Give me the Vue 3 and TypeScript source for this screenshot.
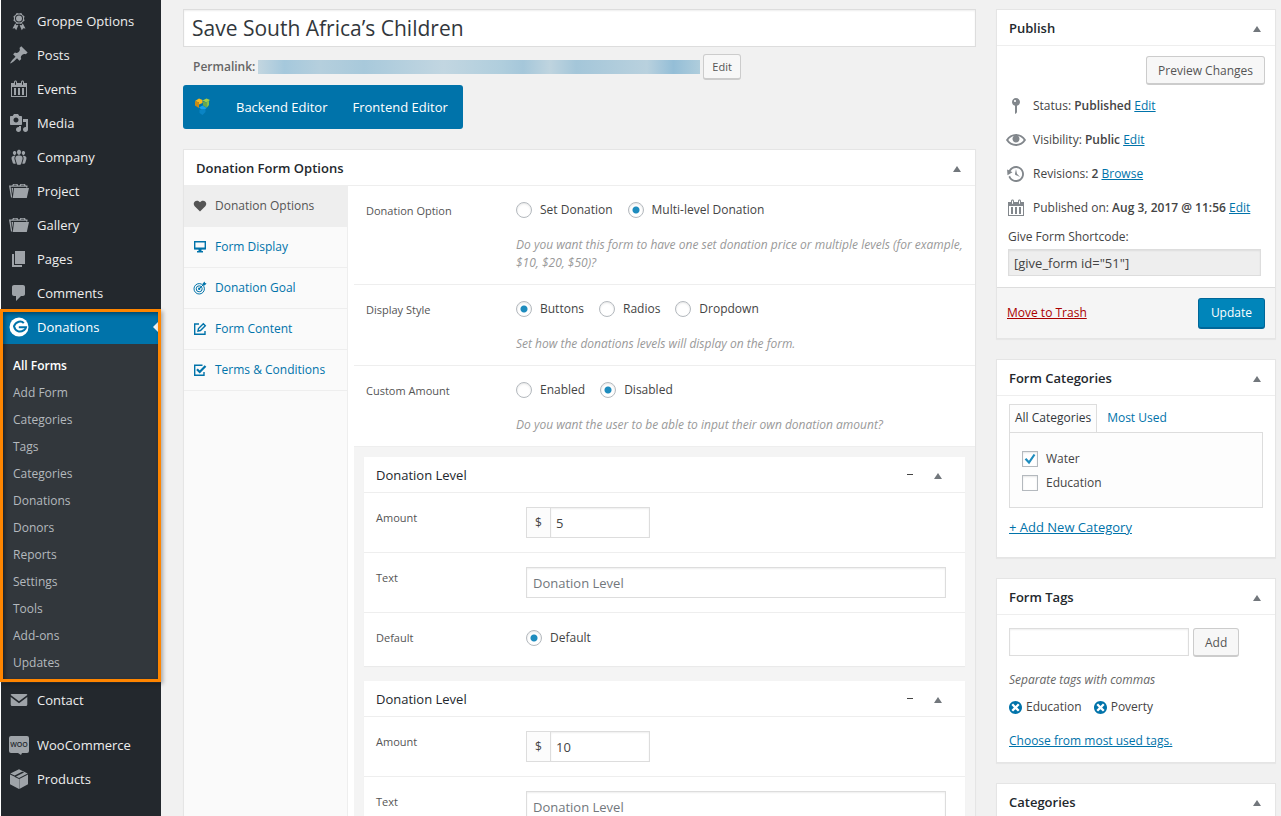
<script setup lang="ts">
import { ref } from 'vue'

interface MenuItem { label: string; icon: string }

const icons: Record<string, string> = {
  award: 'M4.5 5.2 5 7.5l-.5 2.3 2 1.2L7.700 13l2.300-.5 2.300.5 1.200-2 2-1.200L15 7.500l.5-2.300-2-1.300-1.200-2-2.300.6-2.300-.6-1.300 2zM10 11.500a4 4 0 1 1 0-8 4 4 0 0 1 0 8zm0-1a3 3 0 1 0 0-6 3 3 0 0 0 0 6zM6.300 12.200 3.500 17.500l2.300-.2 1.400 1.900 2.200-5.300-2.100.3zM13.700 12.200l2.800 5.300-2.300-.2-1.400 1.900-2.200-5.300 2.100.3z',
  pin: 'M10.44 3.02l1.82-1.82 6.36 6.35-1.83 1.82c-1.05-.68-2.48-.57-3.41.36l-.75.75c-.92.93-1.04 2.35-.35 3.41l-1.83 1.82-2.41-2.41-2.8 2.79c-.42.42-3.38 2.71-3.8 2.29s1.86-3.39 2.28-3.81l2.79-2.79L4.1 9.36l1.83-1.82c1.05.69 2.48.57 3.4-.36l.75-.75c.93-.92 1.05-2.35.36-3.41z',
  calendar: 'M15 4h3v14H2V4h3V3c0-.83.67-1.5 1.5-1.5S8 2.17 8 3v1h4V3c0-.83.67-1.5 1.5-1.5S15 2.17 15 3v1zM6 3v2.5c0 .28.22.5.5.5s.5-.22.5-.5V3c0-.28-.22-.5-.5-.5S6 2.720 6 3zm7 0v2.5c0 .28.22.5.5.5s.5-.22.5-.5V3c0-.28-.22-.5-.5-.5s-.5.22-.5.5zm4 14V8H3v9h14zM7 16V9H5v7h2zm4 0V9H9v7h2zm4 0V9h-2v7h2z',
  media: 'M13 11V4c0-.55-.45-1-1-1h-1.67L9 1H5L3.67 3H2c-.55 0-1 .45-1 1v7c0 .55.45 1 1 1h10c.55 0 1-.45 1-1zM7 4.500c1.380 0 2.500 1.120 2.500 2.500S8.380 9.500 7 9.500 4.500 8.380 4.500 7 5.620 4.500 7 4.500zM14 6h5v10.500c0 1.380-1.120 2.500-2.500 2.500S14 17.880 14 16.500s1.120-2.500 2.500-2.500c.17 0 .34.02.5.05V9h-3V6zm-4 8.050V13h2v3.500c0 1.380-1.120 2.500-2.500 2.500S7 17.880 7 16.500 8.120 14 9.500 14c.17 0 .34.02.5.05z',
  groups: 'M8.03 4.46c-.29 1.28.55 3.46 1.97 3.46 1.41 0 2.25-2.18 1.96-3.46-.22-.98-1.08-1.63-1.96-1.63-.89 0-1.74.65-1.97 1.63zm-4.13.9c-.25 1.08.47 2.93 1.67 2.93s1.92-1.85 1.67-2.93c-.19-.83-.92-1.39-1.67-1.39s-1.48.56-1.67 1.39zm8.86 0c-.25 1.08.47 2.93 1.66 2.93 1.2 0 1.92-1.85 1.67-2.93-.19-.83-.92-1.39-1.67-1.39-.74 0-1.47.56-1.66 1.39zm-.59 11.43l1.25-4.3C14.2 10 12.71 8.47 10 8.47c-2.72 0-4.21 1.53-3.44 4.02l1.26 4.3C8.05 17.51 9 18 10 18c.98 0 1.94-.49 2.17-1.21zm-6.1-7.63c-.49.67-.96 1.83-.42 3.59l1.12 3.79c-.34.2-.77.31-1.2.31-.85 0-1.65-.41-1.85-1.03l-1.07-3.65c-.65-2.11.61-3.4 2.92-3.4.27 0 .54.02.79.06-.1.1-.2.22-.29.33zm8.35-.39c2.31 0 3.58 1.29 2.92 3.4l-1.07 3.65c-.2.62-1 1.03-1.85 1.03-.43 0-.86-.11-1.2-.31l1.11-3.77c.55-1.78.08-2.94-.42-3.61-.08-.11-.18-.23-.28-.33.25-.04.51-.06.79-.06z',
  folder: 'M0 4.500h3.200L4 3h4.500l.8 1.500h1.200l.8-1.500H16l.8 1.500H18.500V6.500H17V5.800H1.600l1.700 10.700H2L0 4.500zM4.600 4.500h3.200l-.4-.7H5zM12 4.500h3.200l-.4-.7h-2.400zM5 7h15L17.800 17H3.800zM2.600 7h1.600L3.300 13z',
  page: 'M6 15V2h10v13H6zm-1 1h8v2H3V5h2v11z',
  comment: 'M5 2h9c1.100 0 2 .9 2 2v7c0 1.100-.9 2-2 2h-2l-5 5v-5H5c-1.100 0-2-.9-2-2V4c0-1.100.9-2 2-2z',
  mail: 'M3.500 4h13.500c.8 0 1.300.4 1.300 1L10 11.300 1.700 5c0-.6.5-1 1.800-1zM1.700 6.900 10 13.200l8.300-6.300V14.500c0 .8-.6 1.500-1.400 1.500H3.100c-.8 0-1.400-.7-1.400-1.500z',
  box: 'M10 .300 18.700 4.600 10 8.900 7 7.400l8-4zM1.300 4.600 10 .300l4 2-8.300 4.100zM1 5.500l4.800 2.300v.1L10 10v9.900L1 15.300zM19 5.500V15.300l-8.700 4.600V10z',
  status: 'M14 6c0 1.860-1.280 3.410-3 3.860V16c0 1-2 2-2 2V9.860c-1.720-.45-3-2-3-3.860 0-2.210 1.790-4 4-4s4 1.790 4 4zM8 5c0 .55.45 1 1 1s1-.45 1-1-.45-1-1-1-1 .45-1 1z',
  eye: 'M19.7 9.4C17.7 6 14 3.9 10 3.9S2.3 6 .3 9.400L0 10l.3.6c2 3.4 5.7 5.5 9.700 5.500s7.700-2.100 9.700-5.500l.3-.6-.3-.6zM10 14.100c-3.100 0-6-1.600-7.700-4.100C3.600 8 5.700 6.600 8 6.100c-.9.6-1.500 1.700-1.500 2.900 0 1.900 1.600 3.500 3.500 3.500s3.500-1.600 3.500-3.500c0-1.200-.6-2.300-1.500-2.900 2.300.5 4.400 1.900 5.700 3.900-1.700 2.500-4.600 4.100-7.700 4.100z',
  history: 'M13.65 2.88c3.93 2.01 5.48 6.84 3.47 10.77s-6.83 5.48-10.77 3.47c-1.87-.96-3.2-2.56-3.86-4.4l1.64-1.03c.45 1.57 1.52 2.95 3.08 3.76 3.01 1.54 6.69.35 8.23-2.66 1.55-3.01.36-6.69-2.65-8.24C9.78 3.01 6.1 4.2 4.56 7.210l1.88.97-4.95 3.08-.39-5.82 1.78.91C4.9 2.4 9.75.89 13.65 2.880zm-4.36 7.83C9.11 10.53 9 10.28 9 10c0-.07.03-.12.04-.19h-.01L10 5l.97 4.81L14 13l-4.5-2.12.02-.02c-.08-.04-.16-.09-.23-.15z',
  dismiss: 'M10 2c4.420 0 8 3.580 8 8s-3.580 8-8 8-8-3.580-8-8 3.580-8 8-8zm5 11l-3-3 3-3-2-2-3 3-3-3-2 2 3 3-3 3 2 2 3-3 3 3z',
}

const topMenu: MenuItem[] = [
  { label: 'Groppe Options', icon: 'award' },
  { label: 'Posts', icon: 'pin' },
  { label: 'Events', icon: 'calendar' },
  { label: 'Media', icon: 'media' },
  { label: 'Company', icon: 'groups' },
  { label: 'Project', icon: 'folder' },
  { label: 'Gallery', icon: 'folder' },
  { label: 'Pages', icon: 'page' },
  { label: 'Comments', icon: 'comment' },
]

const submenu = ['All Forms', 'Add Form', 'Categories', 'Tags', 'Categories', 'Donations', 'Donors', 'Reports', 'Settings', 'Tools', 'Add-ons', 'Updates']

const tabs = [
  { id: 'heart', label: 'Donation Options' },
  { id: 'display', label: 'Form Display' },
  { id: 'goal', label: 'Donation Goal' },
  { id: 'content', label: 'Form Content' },
  { id: 'terms', label: 'Terms & Conditions' },
]
const activeTab = ref('heart')

const title = ref('Save South Africa’s Children')

const options = ref([
  {
    name: 'donation-option', label: 'Donation Option', value: 'Multi-level Donation',
    choices: ['Set Donation', 'Multi-level Donation'],
    hint: 'Do you want this form to have one set donation price or multiple levels (for example, $10, $20, $50)?',
  },
  {
    name: 'display-style', label: 'Display Style', value: 'Buttons',
    choices: ['Buttons', 'Radios', 'Dropdown'],
    hint: 'Set how the donations levels will display on the form.',
  },
  {
    name: 'custom-amount', label: 'Custom Amount', value: 'Disabled',
    choices: ['Enabled', 'Disabled'],
    hint: 'Do you want the user to be able to input their own donation amount?',
  },
])

const levels = ref([
  { amount: '5', text: '' },
  { amount: '10', text: '' },
])
const defaultLevel = ref(0)

const categories = ref([
  { label: 'Water', checked: true },
  { label: 'Education', checked: false },
])
const newTag = ref('')
const tags = ref(['Education', 'Poverty'])

function addTag(): void {
  const tag = newTag.value.trim()
  if (tag) tags.value.push(tag)
  newTag.value = ''
}
</script>

<template>
  <div class="admin">
    <nav class="sidebar" aria-label="Admin menu">
      <a v-for="item in topMenu" :key="item.label" href="#" class="menu-item">
        <svg class="icon" viewBox="0 0 20 20" aria-hidden="true"><path fill-rule="evenodd" :d="icons[item.icon]" /></svg>
        <span>{{ item.label }}</span>
      </a>
      <div class="menu-group">
        <a href="#" class="menu-item current">
          <svg class="icon" viewBox="0 0 20 20" aria-hidden="true">
            <circle cx="10" cy="10" r="9.500" />
            <path class="give-mark" d="M14.800 6.200C12.500 3.300 7 4 5 9.200c1.200 5 5.500 6.900 10 4 1-.8 1.800-1.700 2-2.900H9.800" />
          </svg>
          <span>Donations</span>
        </a>
        <ul class="submenu">
          <li v-for="(entry, i) in submenu" :key="i"><a href="#" :class="{ selected: i === 0 }">{{ entry }}</a></li>
        </ul>
      </div>
      <a href="#" class="menu-item">
        <svg class="icon" viewBox="0 0 20 20" aria-hidden="true"><path :d="icons.mail" /></svg>
        <span>Contact</span>
      </a>
      <a href="#" class="menu-item spaced">
        <svg class="icon" viewBox="0 0 20 20" aria-hidden="true">
          <path d="M2 1h16a2 2 0 0 1 2 2v13a2 2 0 0 1-2 2h-5l-1 2-3-2H2a2 2 0 0 1-2-2V3a2 2 0 0 1 2-2z" />
          <text x="10" y="12" class="woo">WOO</text>
        </svg>
        <span>WooCommerce</span>
      </a>
      <a href="#" class="menu-item">
        <svg class="icon" viewBox="0 0 20 20" aria-hidden="true"><path :d="icons.box" /></svg>
        <span>Products</span>
      </a>
    </nav>

    <main class="content">
      <section class="primary">
        <input v-model="title" class="title" type="text" aria-label="Title" />
        <div class="permalink">
          <strong>Permalink:</strong>
          <span class="url"></span>
          <button type="button" class="button small">Edit</button>
        </div>
        <div class="editors">
          <svg class="composer" viewBox="0 0 18 18" aria-hidden="true">
            <path fill="#fbb81c" d="M2 3 6 .500 9.500 2v3L6 6.500V4.500z" />
            <path fill="#c98a12" d="M2 3l4 1.500V10L2 7.500z" />
            <path fill="#a8cf45" d="m9.500 2.500 4-2 3.500 1.500-3.500 2.500z" />
            <path fill="#6aa84a" d="m10 3.500 3.500 1V10L10 7.500z" />
            <path fill="#8dbf45" d="M13.500 4.500 16 2.800V7l-2.500 3z" />
            <path fill="#17a2ee" d="m6 9.500 3.500-2 4 2.500-1.500 1.500H8.500z" />
            <path fill="#0a84c4" d="M6.500 11.500h6V14l-3 3-3-2z" />
          </svg>
          <button type="button">Backend Editor</button>
          <button type="button">Frontend Editor</button>
        </div>

        <section class="panel">
          <header class="panel-head">
            <h2>Donation Form Options</h2>
            <button type="button" class="toggle" aria-label="Toggle panel"></button>
          </header>
          <div class="form-options">
            <nav class="tabs" aria-label="Form sections">
              <a v-for="tab in tabs" :key="tab.id" href="#" :class="{ active: tab.id === activeTab }" @click.prevent="activeTab = tab.id">
                <svg viewBox="0 0 14 14" aria-hidden="true">
                  <path v-if="tab.id === 'heart'" class="solid" d="M7 12.500 1.700 7.300C-.3 5 1 1.700 4 1.700c1.300 0 2.300.6 3 1.600.7-1 1.700-1.600 3-1.600 3 0 4.300 3.300 2.300 5.600z" />
                  <template v-else-if="tab.id === 'display'">
                    <path class="line" d="M1.700 1.700h10.600v7H1.700z" /><path class="solid" d="M1.700 7.500h10.600v1.700H1.700zM5.500 9h3v2H10v1.500H4V11h1.500z" />
                  </template>
                  <template v-else-if="tab.id === 'goal'">
                    <circle class="thin" cx="6.200" cy="7.800" r="5.200" /><circle class="thin" cx="6.200" cy="7.800" r="3" /><circle class="solid" cx="6.200" cy="7.800" r="1.200" />
                    <path class="thin" d="m6.500 7.500 5-5" /><path class="solid" d="m9.500 2.700 2-2.200.6 1.500 1.500.5-2 2-1.600-.3z" />
                  </template>
                  <template v-else-if="tab.id === 'content'">
                    <path class="line" d="M6 2H1.700v10.300H12V9" /><path class="line" d="m5 9 .5-2.500L10.300 1.700l2 2L7.500 8.500z" />
                  </template>
                  <template v-else>
                    <path class="line" d="M11 9v3.300H1.700V2.300H9.500" /><path class="check" d="m4 6.300 2.700 2.700 5.800-6" />
                  </template>
                </svg>
                <span>{{ tab.label }}</span>
              </a>
            </nav>
            <div class="fields">
              <fieldset v-for="option in options" :key="option.name" class="field" :aria-label="option.label">
                <span class="label">{{ option.label }}</span>
                <div class="field-body">
                  <div class="choices">
                    <label v-for="choice in option.choices" :key="choice">
                      <input v-model="option.value" type="radio" :name="option.name" :value="choice" />
                      <span>{{ choice }}</span>
                    </label>
                  </div>
                  <p class="hint">{{ option.hint }}</p>
                </div>
              </fieldset>
              <div class="levels">
                <section v-for="(level, i) in levels" :key="i" class="level">
                  <header class="level-head">
                    <h3>Donation Level</h3>
                    <button type="button" class="remove" aria-label="Remove level"></button>
                    <button type="button" class="toggle" aria-label="Toggle level"></button>
                  </header>
                  <div class="level-row">
                    <label class="label" :for="'amount-' + i">Amount</label>
                    <div class="money">
                      <span>$</span>
                      <input :id="'amount-' + i" v-model="level.amount" type="text" />
                    </div>
                  </div>
                  <div class="level-row">
                    <label class="label" :for="'text-' + i">Text</label>
                    <input :id="'text-' + i" v-model="level.text" class="text" type="text" placeholder="Donation Level" />
                  </div>
                  <div class="level-row short">
                    <span class="label">Default</span>
                    <div class="choices">
                      <label>
                        <input v-model="defaultLevel" type="radio" name="default-level" :value="i" />
                        <span>Default</span>
                      </label>
                    </div>
                  </div>
                </section>
              </div>
            </div>
          </div>
        </section>
      </section>

      <aside class="secondary">
        <section class="panel">
          <header class="panel-head">
            <h2>Publish</h2>
            <button type="button" class="toggle" aria-label="Toggle panel"></button>
          </header>
          <div class="publish">
            <button type="button" class="button preview">Preview Changes</button>
            <div class="publish-row">
              <svg class="icon" viewBox="0 0 20 20" aria-hidden="true"><path :d="icons.status" /></svg>
              <span>Status: <b>Published</b> <a href="#">Edit</a></span>
            </div>
            <div class="publish-row">
              <svg class="icon" viewBox="0 0 20 20" aria-hidden="true"><path :d="icons.eye" /></svg>
              <span>Visibility: <b>Public</b> <a href="#">Edit</a></span>
            </div>
            <div class="publish-row">
              <svg class="icon" viewBox="0 0 20 20" aria-hidden="true"><path :d="icons.history" /></svg>
              <span>Revisions: <b>2</b> <a href="#">Browse</a></span>
            </div>
            <div class="publish-row">
              <svg class="icon" viewBox="0 0 20 20" aria-hidden="true"><path fill-rule="evenodd" :d="icons.calendar" /></svg>
              <span>Published on: <b>Aug 3, 2017 @ 11:56</b> <a href="#">Edit</a></span>
            </div>
            <label class="shortcode-label" for="shortcode">Give Form Shortcode:</label>
            <input id="shortcode" class="shortcode" type="text" readonly value='[give_form id="51"]' />
          </div>
          <footer class="publish-foot">
            <a href="#" class="trash">Move to Trash</a>
            <button type="button" class="button update">Update</button>
          </footer>
        </section>

        <section class="panel">
          <header class="panel-head">
            <h2>Form Categories</h2>
            <button type="button" class="toggle" aria-label="Toggle panel"></button>
          </header>
          <div class="categories">
            <div class="category-tabs">
              <a href="#" class="on">All Categories</a>
              <a href="#">Most Used</a>
            </div>
            <div class="category-list">
              <label v-for="category in categories" :key="category.label">
                <span class="tick">
                  <input v-model="category.checked" type="checkbox" />
                  <svg v-if="category.checked" viewBox="0 0 14 14" aria-hidden="true"><path d="M2.500 6.700 6 10.500l5.500-8" /></svg>
                </span>
                <span>{{ category.label }}</span>
              </label>
            </div>
            <a href="#" class="add-category">+ Add New Category</a>
          </div>
        </section>

        <section class="panel">
          <header class="panel-head">
            <h2>Form Tags</h2>
            <button type="button" class="toggle" aria-label="Toggle panel"></button>
          </header>
          <div class="tags">
            <form class="tag-form" @submit.prevent="addTag">
              <input v-model="newTag" type="text" aria-label="New tag" />
              <button type="submit" class="button">Add</button>
            </form>
            <p>Separate tags with commas</p>
            <div class="tag-list">
              <span v-for="tag in tags" :key="tag" class="tag">
                <button type="button" :aria-label="'Remove ' + tag" @click="tags = tags.filter((t) => t !== tag)">
                  <svg viewBox="2 2 16 16" aria-hidden="true"><path :d="icons.dismiss" /></svg>
                </button>
                {{ tag }}
              </span>
            </div>
            <a href="#">Choose from most used tags.</a>
          </div>
        </section>

        <section class="panel">
          <header class="panel-head">
            <h2>Categories</h2>
            <button type="button" class="toggle" aria-label="Toggle panel"></button>
          </header>
          <div class="categories"></div>
        </section>
      </aside>
    </main>
  </div>
</template>

<style>
body {
  margin: 0;
  background: #f1f1f1;
}
</style>

<style scoped>
* {
  box-sizing: border-box;
}

.admin {
  display: flex;
  height: 100vh;
  overflow: hidden;
  background: #f1f1f1;
  color: #444;
  font-family: "Open Sans", "Noto Sans", sans-serif;
  font-size: 12px;
  line-height: 18px;
}

button,
input {
  font-family: inherit;
  font-size: inherit;
  color: inherit;
  margin: 0;
}

button {
  cursor: pointer;
}

a {
  color: #0073aa;
}

h2,
h3,
p,
ul {
  margin: 0;
  padding: 0;
}

/* Sidebar */
.sidebar {
  flex: 0 0 161px;
  padding-top: 4px;
  border-left: 1px solid #fff;
  background: #23282d;
}

.menu-item {
  display: flex;
  align-items: center;
  gap: 8px;
  height: 34px;
  padding-left: 8px;
  color: #eee;
  font-size: 13px;
  text-decoration: none;
}

.icon {
  flex: none;
  width: 20px;
  height: 20px;
  fill: #9ea3a8;
}

.menu-item.spaced {
  margin-top: 11px;
}

.menu-group {
  position: relative;
  background: #32373c;
}

.menu-group::after {
  content: "";
  position: absolute;
  inset: -1px 0 1px -1px;
  border: 3px solid #ff8500;
  box-shadow: 2px 2px 4px rgba(0, 0, 0, 0.3), inset 2px 2px 4px rgba(0, 0, 0, 0.4);
  pointer-events: none;
}

.menu-item.current {
  position: relative;
  background: #0073aa;
  color: #fff;
}

.menu-item.current::after {
  content: "";
  position: absolute;
  right: 0;
  top: 9px;
  border: 8px solid transparent;
  border-right-color: #f1f1f1;
}

.current .icon {
  fill: #fff;
}

.give-mark {
  fill: none;
  stroke: #0073aa;
  stroke-width: 2;
}

.woo {
  fill: #23282d;
  font-size: 7px;
  font-weight: 600;
  text-anchor: middle;
}

.submenu {
  padding: 8px 0 7px;
  list-style: none;
}

.submenu a {
  display: block;
  padding-left: 12px;
  color: #b4b9be;
  line-height: 27px;
  text-decoration: none;
}

.submenu .selected {
  color: #fff;
  font-weight: 600;
}

/* Page columns */
.content {
  flex: 1;
  display: flex;
  align-items: flex-start;
  gap: 20px;
  min-width: 0;
  padding: 9px 5px 0 22px;
}

.primary {
  flex: 1;
  min-width: 0;
}

.secondary {
  flex: 0 0 280px;
  display: flex;
  flex-direction: column;
  gap: 20px;
}

.title {
  display: block;
  width: 100%;
  height: 38px;
  padding: 0 8px;
  border: 1px solid #ddd;
  background: #fff;
  box-shadow: inset 0 1px 2px rgba(0, 0, 0, 0.07);
  color: #32373c;
  font-size: 21px;
}

.permalink {
  display: flex;
  align-items: center;
  gap: 3px;
  height: 38px;
  padding: 2px 0 0 10px;
  color: #666;
}

.permalink strong {
  font-weight: 600;
}

.url {
  width: 442px;
  height: 14px;
  background: linear-gradient(90deg, #c3d6e0 0, #a5c8dc 6%, #b5cfdd 14%, #a8c9db 24%, #c2d6e1 42%, #b0cedd 55%, #a5c7da 60%, #bfd4df 66%, #a4c6d9 72%, #b9d1de 88%, #94bed7 94%, #afcddc 100%);
}

.button {
  height: 29px;
  padding: 0 11px;
  border: 1px solid #ccc;
  border-bottom-width: 2px;
  border-radius: 3px;
  background: #f7f7f7;
  color: #555;
}

.button.small {
  height: 26px;
  padding: 0 8px;
  font-size: 11px;
}

.editors {
  display: flex;
  align-items: center;
  gap: 25px;
  width: max-content;
  height: 44px;
  padding: 0 15px 0 10px;
  border-radius: 3px;
  background: #0073aa;
}

.composer {
  width: 18px;
  height: 18px;
}

.editors button {
  padding: 0;
  border: 0;
  background: none;
  color: #fff;
  font-size: 13px;
}

/* Panels */
.panel {
  border: 1px solid #e5e5e5;
  background: #fff;
  box-shadow: 0 1px 1px rgba(0, 0, 0, 0.04);
}

.primary .panel {
  margin-top: 20px;
}

.panel-head,
.level-head {
  display: flex;
  align-items: center;
  height: 36px;
  padding: 0 12px;
  border-bottom: 1px solid #eee;
}

.panel-head h2,
.level-head h3 {
  flex: 1;
  color: #23282d;
  font-size: 13px;
  font-weight: 600;
}

.level-head h3 {
  font-weight: 400;
}

.toggle {
  width: 10px;
  height: 20px;
  padding: 2px 0 0;
  border: 0;
  background: none;
}

.toggle::before {
  content: "";
  display: block;
  width: 0;
  border: 4px solid transparent;
  border-top: 0;
  border-bottom: 6px solid #72777c;
}

.form-options {
  display: flex;
  background: #fff;
}

.tabs {
  flex: 0 0 164px;
  border-right: 1px solid #eee;
  background: #fafafa;
}

.tabs a {
  display: flex;
  align-items: center;
  gap: 8px;
  height: 41px;
  padding-left: 9px;
  border-bottom: 1px solid #eee;
  text-decoration: none;
}

.tabs a.active {
  background: #eee;
  color: #555;
}

.tabs svg {
  width: 14px;
  height: 14px;
  fill: none;
  stroke: none;
}

.solid {
  fill: currentColor;
}

.line,
.thin,
.check {
  stroke: currentColor;
  stroke-width: 1.400;
}

.thin {
  stroke-width: 1;
}

.check {
  stroke-width: 2.200;
}

.fields {
  flex: 1;
  min-width: 0;
  padding-left: 6px;
}

.field {
  display: flex;
  min-width: 0;
  margin: 0;
  padding: 15px 10px 12px 12px;
  border: 0;
  border-bottom: 1px solid #eee;
}

.label {
  flex: 0 0 150px;
  padding-top: 1px;
  color: #555;
  font-size: 11px;
}

.choices {
  display: flex;
  align-items: center;
  gap: 15px;
}

.choices label {
  display: flex;
  align-items: center;
  gap: 8px;
  height: 18px;
}

input[type="radio"],
input[type="checkbox"] {
  appearance: none;
  flex: none;
  width: 16px;
  height: 16px;
  border: 1px solid #b4b9be;
  background: #fff;
  box-shadow: inset 0 1px 2px rgba(0, 0, 0, 0.1);
}

input[type="radio"] {
  border-radius: 50%;
}

input[type="radio"]:checked {
  background: radial-gradient(circle, #1e8cbe 3px, #fff 4px);
}

.hint {
  margin-top: 17px;
  color: #999;
  font-size: 12px;
  font-style: italic;
}

.levels {
  display: flex;
  flex-direction: column;
  gap: 15px;
  padding: 10px 10px 15px;
  background: #f4f4f4;
}

.level {
  background: #fff;
  box-shadow: 0 1px 1px rgba(0, 0, 0, 0.04);
}

.level-head {
  gap: 21px;
  padding-right: 21px;
}

.remove {
  width: 6px;
  height: 20px;
  padding: 0;
  border: 0;
  background: linear-gradient(#444, #444) center / 6px 1px no-repeat;
}

.level-row {
  display: flex;
  height: 60px;
  padding: 14px 19px 0 12px;
  border-bottom: 1px solid #eee;
}

.level-row .label {
  padding-top: 2px;
}

.level-row.short {
  height: 53px;
  border-bottom: 0;
}

.level-row.short .choices {
  height: 22px;
}

.money {
  display: flex;
  width: 124px;
  height: 31px;
  border: 1px solid #ddd;
}

.money span {
  flex: 0 0 24px;
  border-right: 1px solid #ddd;
  background: #fcfcfc;
  line-height: 30px;
  text-align: center;
}

.money input {
  flex: 1;
  min-width: 0;
  padding: 0 5px;
  border: 0;
  background: #fff;
  box-shadow: inset 0 1px 2px rgba(0, 0, 0, 0.07);
  font-size: 13px;
}

.text {
  flex: 1;
  min-width: 0;
  height: 31px;
  padding: 0 6px;
  border: 1px solid #ddd;
  background: #fff;
  box-shadow: inset 0 1px 2px rgba(0, 0, 0, 0.07);
  font-size: 13px;
}

.text::placeholder {
  color: #72777c;
}

/* Publish box */
.publish {
  display: flex;
  flex-direction: column;
  padding: 10px 14px 11px 10px;
}

.preview {
  align-self: flex-end;
  margin: 0 -4px 4px 0;
}

.publish-row {
  display: flex;
  align-items: center;
  gap: 7px;
  height: 34px;
  white-space: nowrap;
}

.publish b {
  font-weight: 600;
}

.publish-row .icon {
  margin-left: -1px;
  fill: #82878c;
}

.shortcode-label {
  padding: 3px 0 3px 1px;
}

.shortcode {
  width: auto;
  height: 27px;
  margin-left: 1px;
  padding: 0 5px;
  border: 1px solid #ddd;
  background: #eee;
  box-shadow: inset 0 1px 2px rgba(0, 0, 0, 0.07);
  font-size: 13px;
}

.publish-foot {
  display: flex;
  align-items: center;
  justify-content: space-between;
  height: 51px;
  padding: 0 10px;
  border-top: 1px solid #ddd;
  background: #f5f5f5;
}

.trash {
  color: #a00;
}

.update {
  height: 31px;
  padding: 0 12px;
  border-color: #006799;
  background: #0085ba;
  color: #fff;
}

/* Categories box */
.categories {
  min-height: 161px;
  padding: 8px 12px 0;
}

.category-tabs {
  display: flex;
}

.category-tabs a {
  height: 28px;
  padding: 5px 5px 0;
  text-decoration: none;
}

.category-tabs .on {
  position: relative;
  z-index: 1;
  margin: 0 5px -1px 0;
  border: 1px solid #ddd;
  border-bottom: 0;
  background: #fdfdfd;
  color: #32373c;
  padding-top: 4px;
}

.category-list {
  min-height: 76px;
  padding: 14px 12px 12px;
  border: 1px solid #ddd;
  background: #fdfdfd;
}

.category-list label {
  display: flex;
  align-items: center;
  gap: 8px;
  height: 24px;
}

.tick {
  position: relative;
  display: flex;
}

.tick svg {
  position: absolute;
  inset: 1px;
  fill: none;
  stroke: #1e8cbe;
  stroke-width: 2.200;
  pointer-events: none;
}

.add-category {
  display: inline-block;
  margin-top: 10px;
  font-size: 13px;
}

/* Tags box */
.tags {
  min-height: 147px;
  padding: 13px 12px 0;
}

.tag-form {
  display: flex;
  gap: 4px;
}

.tag-form input {
  width: 180px;
  height: 28px;
  padding: 0 5px;
  border: 1px solid #ddd;
  box-shadow: inset 0 1px 2px rgba(0, 0, 0, 0.07);
}

.tags p {
  margin-top: 14px;
  color: #666;
  font-style: italic;
}

.tag-list {
  display: flex;
  gap: 12px;
  margin: 9px 0 16px;
}

.tag {
  display: flex;
  align-items: center;
  gap: 4px;
}

.tag button {
  display: flex;
  padding: 0;
  border: 0;
  background: none;
}

.tag svg {
  width: 13px;
  height: 13px;
  fill: #0073aa;
}
</style>
